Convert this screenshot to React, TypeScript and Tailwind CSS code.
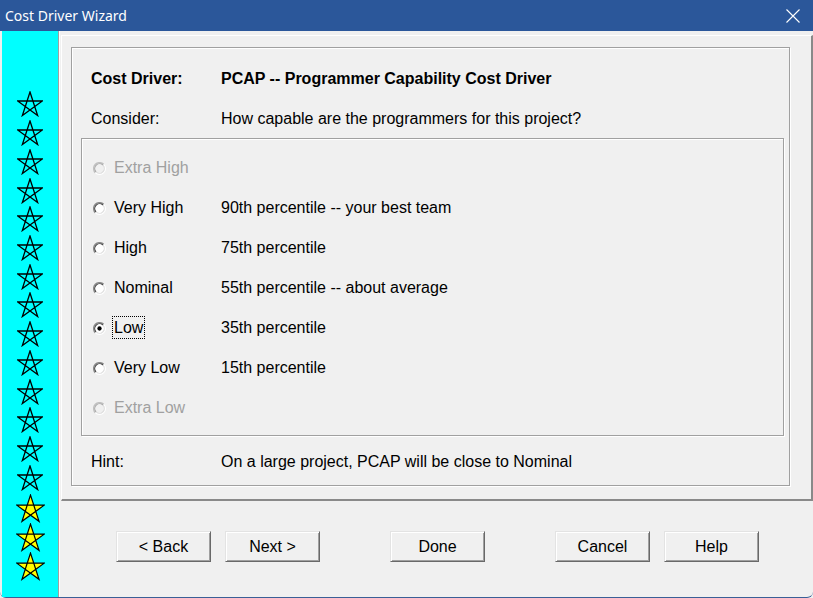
import React from "react";

const FONT = { fontFamily: '"Liberation Sans", Arial, sans-serif' };

const STAR_PATH = "M13 1 L20.64 24.52 L0.64 9.98 L25.36 9.98 L5.36 24.52 Z";

function Star({ filled }: { filled?: boolean }) {
  return (
    <svg width={filled ? 29 : 26} height={filled ? 29 : 26} viewBox="0 0 26 26">
      <path
        d={STAR_PATH}
        fill={filled ? "#ffff00" : "none"}
        stroke="#000"
        strokeWidth={filled ? 1.1 : 1.3}
        strokeLinejoin="miter"
      />
    </svg>
  );
}

function Radio({ checked, disabled }: { checked?: boolean; disabled?: boolean }) {
  return (
    <svg width="13" height="13" viewBox="0 0 12 12" className="shrink-0">
      <circle cx="6" cy="6" r="5" fill={disabled ? "#f0f0f0" : "#fff"} />
      <path d="M2.11 9.89 A5.5 5.5 0 0 1 9.89 2.11" fill="none" stroke={disabled ? "#c0c0c0" : "#8a8a8a"} strokeWidth="1.1" />
      <path d="M9.89 2.11 A5.5 5.5 0 0 1 2.11 9.89" fill="none" stroke="#fff" strokeWidth="1" />
      <path d="M2.82 9.18 A4.5 4.5 0 0 1 9.18 2.82" fill="none" stroke={disabled ? "#a8a8a8" : "#404040"} strokeWidth="1.1" />
      <path d="M9.18 2.82 A4.5 4.5 0 0 1 2.82 9.18" fill="none" stroke="#dcdcdc" strokeWidth="1" />
      {checked && <circle cx="6" cy="6" r="2" fill="#000" />}
    </svg>
  );
}

const OPTIONS: { label: string; desc: string; disabled?: boolean; checked?: boolean }[] = [
  { label: "Extra High", desc: "", disabled: true },
  { label: "Very High", desc: "90th percentile -- your best team" },
  { label: "High", desc: "75th percentile" },
  { label: "Nominal", desc: "55th percentile -- about average" },
  { label: "Low", desc: "35th percentile", checked: true },
  { label: "Very Low", desc: "15th percentile" },
  { label: "Extra Low", desc: "", disabled: true },
];

function Button({ children, className }: { children: React.ReactNode; className?: string }) {
  return (
    <button
      className={
        "h-[31px] w-[95px] bg-[#f0f0f0] text-[16px] text-black border border-t-[#e3e3e3] border-l-[#e3e3e3] border-r-[#696969] border-b-[#696969] shadow-[inset_1px_1px_0_#fff,inset_-1px_-1px_0_#a0a0a0] " +
        (className ?? "")
      }
      style={FONT}
    >
      {children}
    </button>
  );
}

export default function App() {
  return (
    <div className="w-[813px] h-[598px] bg-[#f0f0f0] flex flex-col overflow-hidden" style={FONT}>
      {/* Title bar */}
      <div className="h-[31px] shrink-0 bg-[#2b579a] flex items-center justify-between pl-[5px] pr-[13px]">
        <span className="text-white text-[14px]" style={{ fontFamily: '"Noto Sans", sans-serif' }}>
          Cost Driver Wizard
        </span>
        <svg width="14" height="14" viewBox="0 0 14 14">
          <path d="M0.5 0.5 L13.5 13.5 M13.5 0.5 L0.5 13.5" stroke="#fff" strokeWidth="1.1" />
        </svg>
      </div>

      <div className="flex flex-1 pl-[2px] border-b border-[#3a5f96] rounded-b-[6px]">
        {/* Star column */}
        <div className="w-[56px] bg-[#00ffff] flex flex-col items-center pt-[59px]">
          {Array.from({ length: 14 }).map((_, i) => (
            <div key={i} className="h-[28.73px] flex items-center justify-center">
              <Star />
            </div>
          ))}
          <div className="mt-[2px]" />
          {Array.from({ length: 3 }).map((_, i) => (
            <div key={"y" + i} className="h-[29px] flex items-center justify-center">
              <Star filled />
            </div>
          ))}
        </div>
        <div className="w-[2px] border-l border-[#a0a0a0] bg-white" />

        {/* Right side */}
        <div className="flex-1 flex flex-col">
          <div className="mt-[4px] ml-[1px] h-[466px] border-t border-l border-white border-r-2 border-b-2 border-r-[#898989] border-b-[#898989] pl-[9px] pt-[11px]">
            <div className="w-[719px] h-[439px] border border-[#a0a0a0] shadow-[inset_1px_1px_0_#fff,1px_1px_0_#fff] pt-[10px]">
              <div className="h-[40px] flex items-center pt-[2px] pl-[19px] font-bold text-[16px] text-black">
                <span className="w-[130px]">Cost Driver:</span>
                <span>PCAP -- Programmer Capability Cost Driver</span>
              </div>
              <div className="h-[40px] flex items-center pt-[2px] pl-[19px] text-[16px] text-black">
                <span className="w-[130px]">Consider:</span>
                <span>How capable are the programmers for this project?</span>
              </div>
              <div className="ml-[9px] w-[703px] h-[298px] border border-[#a0a0a0] shadow-[inset_1px_1px_0_#fff,1px_1px_0_#fff] py-[8px] pl-[11px]">
                {OPTIONS.map((o) => (
                  <div
                    key={o.label}
                    className={
                      "h-[40px] flex items-center pt-[2px] text-[16px] " +
                      (o.disabled ? "text-[#a0a0a0]" : "text-black")
                    }
                  >
                    <Radio checked={o.checked} disabled={o.disabled} />
                    <span className="w-[107px] ml-[8px]">
                      {o.checked ? (
                        <span className="-ml-[2px] px-[1px] py-[2px] border border-dotted border-black">
                          {o.label}
                        </span>
                      ) : (
                        o.label
                      )}
                    </span>
                    <span>{o.desc}</span>
                  </div>
                ))}
              </div>
              <div className="mt-[5px] h-[40px] flex items-center pt-[2px] pl-[19px] text-[16px] text-black">
                <span className="w-[130px]">Hint:</span>
                <span>On a large project, PCAP will be close to Nominal</span>
              </div>
            </div>
          </div>

          {/* Buttons */}
          <div className="flex mt-[30px] pl-[56px]">
            <Button>&lt; Back</Button>
            <Button className="ml-[14px]">Next &gt;</Button>
            <Button className="ml-[70px]">Done</Button>
            <Button className="ml-[70px]">Cancel</Button>
            <Button className="ml-[14px]">Help</Button>
          </div>
        </div>
      </div>
    </div>
  );
}
